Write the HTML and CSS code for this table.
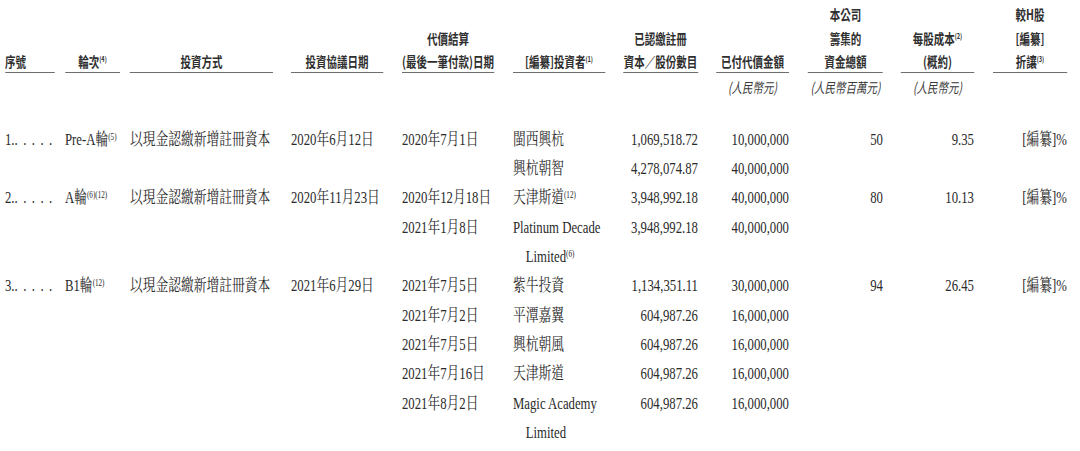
FILE: index.html
```html
<!DOCTYPE html>
<html lang="zh-Hant">
<head>
<meta charset="utf-8">
<title>投資詳情</title>
<link rel="stylesheet" href="styles.css">
</head>
<body>
<div class="frame">
<div class="sheet">
  <div class="grid head">
    <div class="seq"><div class="hbox"><div class="htext">序號</div></div></div>
    <div class="round"><div class="hbox"><div class="htext">輪次<sup>(4)</sup></div></div></div>
    <div class="method"><div class="hbox"><div class="htext">投資方式</div></div></div>
    <div class="agree"><div class="hbox"><div class="htext">投資協議日期</div></div></div>
    <div class="settle"><div class="hbox"><div class="htext">代價結算<br>(最後一筆付款)日期</div></div></div>
    <div class="investor"><div class="hbox"><div class="htext">[編纂]投資者<sup>(1)</sup></div></div></div>
    <div class="shares"><div class="hbox"><div class="htext">已認繳註冊<br>資本／股份數目</div></div></div>
    <div class="paid"><div class="hbox"><div class="htext">已付代價金額</div></div></div>
    <div class="raised"><div class="hbox"><div class="htext">本公司<br>籌集的<br>資金總額</div></div></div>
    <div class="cost"><div class="hbox"><div class="htext">每股成本<sup>(2)</sup><br>(概約)</div></div></div>
    <div class="disc"><div class="hbox"><div class="htext">較H股<br>[編纂]<br>折讓<sup>(3)</sup></div></div></div>
  </div>
  <div class="grid units">
    <div class="paid">(人民幣元)</div>
    <div class="raised">(人民幣百萬元)</div>
    <div class="cost">(人民幣元)</div>
  </div>
  <div class="rows">
    <div class="grid row">
      <div class="seq">1.. . . . .</div>
      <div class="round">Pre-A輪<sup>(5)</sup></div>
      <div class="method">以現金認繳新增註冊資本</div>
      <div class="agree">2020年6月12日</div>
      <div class="settle">2020年7月1日</div>
      <div class="investor">閩西興杭</div>
      <div class="shares">1,069,518.72</div>
      <div class="paid">10,000,000</div>
      <div class="raised">50</div>
      <div class="cost">9.35</div>
      <div class="disc">[編纂]%</div>
    </div>
    <div class="grid row">
      <div class="investor">興杭朝智</div>
      <div class="shares">4,278,074.87</div>
      <div class="paid">40,000,000</div>
    </div>
    <div class="grid row">
      <div class="seq">2.. . . . .</div>
      <div class="round">A輪<sup>(6)(12)</sup></div>
      <div class="method">以現金認繳新增註冊資本</div>
      <div class="agree">2020年11月23日</div>
      <div class="settle">2020年12月18日</div>
      <div class="investor">天津斯道<sup>(12)</sup></div>
      <div class="shares">3,948,992.18</div>
      <div class="paid">40,000,000</div>
      <div class="raised">80</div>
      <div class="cost">10.13</div>
      <div class="disc">[編纂]%</div>
    </div>
    <div class="grid row">
      <div class="settle">2021年1月8日</div>
      <div class="investor"><span>Platinum Decade</span><br><span>Limited<sup>(6)</sup></span></div>
      <div class="shares">3,948,992.18</div>
      <div class="paid">40,000,000</div>
    </div>
    <div class="grid row">
      <div class="seq">3.. . . . .</div>
      <div class="round">B1輪<sup>(12)</sup></div>
      <div class="method">以現金認繳新增註冊資本</div>
      <div class="agree">2021年6月29日</div>
      <div class="settle">2021年7月5日</div>
      <div class="investor">紫牛投資</div>
      <div class="shares">1,134,351.11</div>
      <div class="paid">30,000,000</div>
      <div class="raised">94</div>
      <div class="cost">26.45</div>
      <div class="disc">[編纂]%</div>
    </div>
    <div class="grid row">
      <div class="settle">2021年7月2日</div>
      <div class="investor">平潭嘉翼</div>
      <div class="shares">604,987.26</div>
      <div class="paid">16,000,000</div>
    </div>
    <div class="grid row">
      <div class="settle">2021年7月5日</div>
      <div class="investor">興杭朝風</div>
      <div class="shares">604,987.26</div>
      <div class="paid">16,000,000</div>
    </div>
    <div class="grid row">
      <div class="settle">2021年7月16日</div>
      <div class="investor">天津斯道</div>
      <div class="shares">604,987.26</div>
      <div class="paid">16,000,000</div>
    </div>
    <div class="grid row">
      <div class="settle">2021年8月2日</div>
      <div class="investor"><span>Magic Academy</span><br><span>Limited</span></div>
      <div class="shares">604,987.26</div>
      <div class="paid">16,000,000</div>
    </div>
  </div>
</div>
</div>
</body>
</html>
```
FILE: styles.css
```css
html, body {
  margin: 0;
  padding: 0;
  background: #ffffff;
  overflow: hidden;
}

.frame {
  width: 1080px;
  height: 451px;
  overflow: hidden;
}

.sheet {
  width: 1440px;
  box-sizing: border-box;
  padding: 3.25px 0 0 6.67px;
  transform: scaleX(0.75);
  transform-origin: 0 0;
  color: #2a2a2a;
}

.grid {
  display: grid;
  grid-template-columns: 80px 86.67px 214.67px 148px 148px 146.67px 124px 122.67px 124px 122.67px 98.67px;
}

/* columns */
.seq      { grid-column: 1;  padding-right: 13.33px; text-align: left; }
.round    { grid-column: 2;  padding-right: 13.33px; text-align: left; }
.method   { grid-column: 3;  padding-right: 24px;    text-align: left; }
.agree    { grid-column: 4;  padding-right: 25.33px; text-align: left; }
.settle   { grid-column: 5;  padding-right: 25.33px; text-align: left; }
.investor { grid-column: 6;  padding-right: 0;       text-align: left; }
.shares   { grid-column: 7;  padding-right: 24px;    text-align: right; }
.paid     { grid-column: 8;  padding-right: 25.33px; text-align: right; }
.raised   { grid-column: 9;  padding-right: 24px;    text-align: right; }
.cost     { grid-column: 10; padding-right: 25.33px; text-align: right; }
.disc     { grid-column: 11; padding-right: 0;       text-align: right; }

/* header */
.head {
  align-items: end;
  font-weight: bold;
  font-size: 14px;
  line-height: 23.5px;
  color: #2f2f2f;
}
.head > div { text-align: center; }
.head > .seq { text-align: left; }
.head > .investor { padding-right: 24px; }

.hbox {
  border-bottom: 1.5px solid #6e6e6e;
}
.htext {
  margin-bottom: -2.25px;
  font-family: "Noto Sans CJK TC", sans-serif;
}
.head sup {
  font-size: 7.5px;
  line-height: 0;
  vertical-align: 5px;
}

/* units */
.units {
  margin-top: 3.25px;
  font-family: "Noto Sans CJK TC", sans-serif;
  font-style: italic;
  font-size: 14px;
  line-height: 23.5px;
  color: #3a3a3a;
}
.units > div { text-align: center; }

/* body */
.rows {
  margin-top: 25.58px;
  font-family: "Liberation Serif", "Noto Serif CJK TC", "Noto Sans CJK TC", serif;
  font-size: 17px;
  line-height: 29.33px;
}
.row { align-items: start; }
.row .seq { word-spacing: 3px; }
.row .investor {
  padding-left: 1em;
  text-indent: -1em;
}
.rows sup {
  font-size: 9.5px;
  line-height: 0;
  vertical-align: 5px;
}
```
